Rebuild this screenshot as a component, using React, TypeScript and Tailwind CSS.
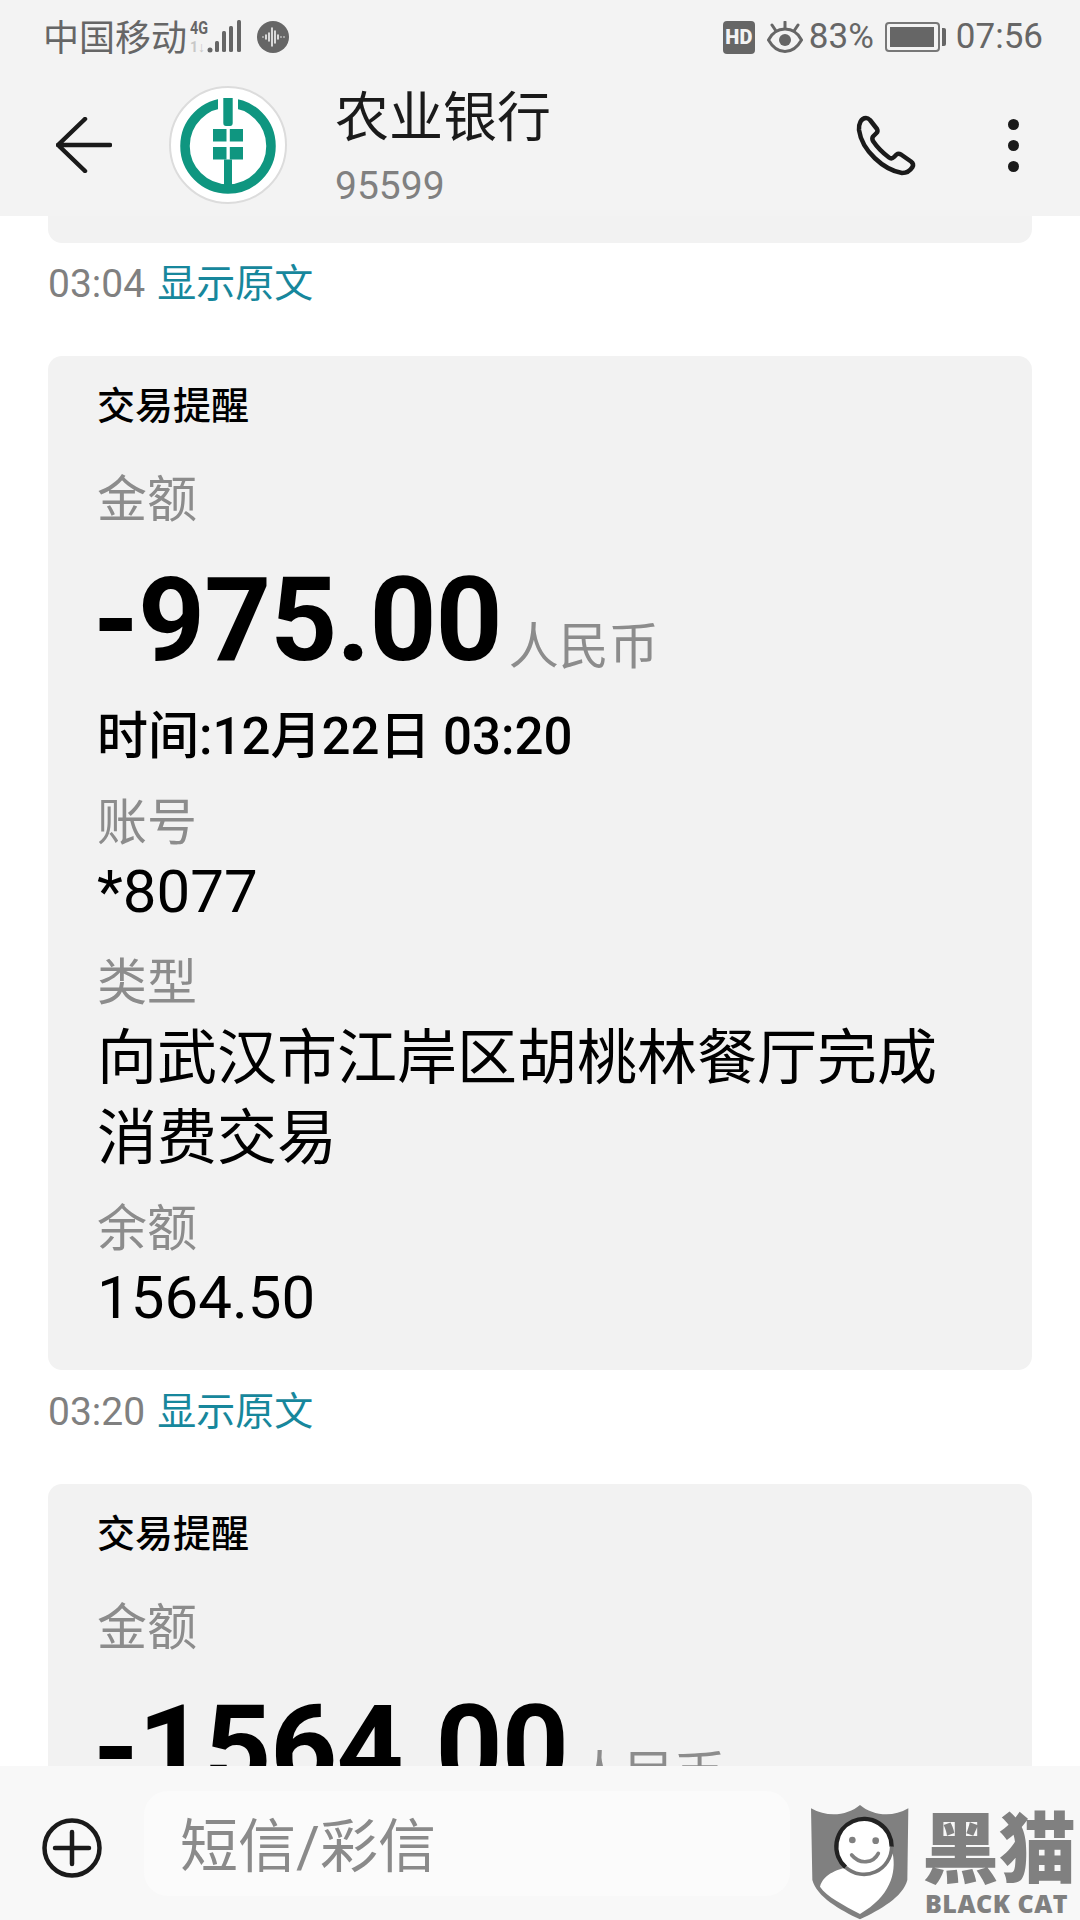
import React from 'react';

function SignalIcon() {
  return (
    <svg width="54" height="36" viewBox="0 0 54 36" className="ml-[3px]">
      <text x="0" y="15" fontSize="18" fontWeight="700" fill="#666" fontFamily="Roboto" textLength="18" lengthAdjust="spacingAndGlyphs">4G</text>
      <text x="0" y="33" fontSize="14" fontWeight="700" fill="#c8c8c8" fontFamily="Roboto">1↓</text>
      <circle cx="20" cy="31" r="2.5" fill="#666" />
      <rect x="25" y="22" width="4" height="11" rx="1.5" fill="#666" />
      <rect x="32" y="12" width="4" height="21" rx="1.5" fill="#666" />
      <rect x="39" y="7" width="4" height="26" rx="1.5" fill="#666" />
      <rect x="47" y="1" width="4" height="32" rx="1.5" fill="#666" />
    </svg>
  );
}

function VoiceIcon() {
  return (
    <svg width="32" height="32" viewBox="0 0 32 32" className="ml-[13px]">
      <circle cx="16" cy="16" r="16" fill="#666" />
      <g stroke="#fff" strokeWidth="1.5" strokeLinecap="round">
        <path d="M6 16v0M9 14v4M12 12v8M15 7v18M18 10v12M21 14v4M24 16v0M27 16v0" />
      </g>
    </svg>
  );
}

function EyeIcon() {
  return (
    <svg width="36" height="32" viewBox="0 0 36 32" fill="none" stroke="#666" strokeWidth="3" className="ml-[12px]">
      <path d="M1.5 19C6 10 12 8 18 8s12 2 16.5 11C30 27 24 30.5 18 30.5S6 27 1.5 19Z" />
      <circle cx="18" cy="19" r="6" fill="#666" stroke="none" />
      <path d="M18 1v6M5 4l4 6M31 4l-4 6" strokeLinecap="round" />
    </svg>
  );
}

function Battery() {
  return (
    <div className="ml-[11px] flex items-center">
      <div className="h-[30px] w-[55px] rounded-[4px] border-2 border-[#777] p-[3px]">
        <div className="h-full w-[44px] bg-[#666]" />
      </div>
      <div className="ml-[2px] h-[18px] w-[4px] rounded-r-[2px] bg-[#666]" />
    </div>
  );
}

function BankLogo() {
  return (
    <svg width="118" height="118" viewBox="-59 -59 118 118" className="ml-[57px] shrink-0">
      <circle r="58" fill="#fff" stroke="#dcdcdc" strokeWidth="2" />
      <circle cy="1" r="43" fill="none" stroke="#0f9680" strokeWidth="9.5" />
      <rect x="-10" y="-50" width="20" height="34" fill="#fff" />
      <path d="M-4.7 -47H4.7V-22Q4.7 -19 2 -19H-2Q-4.7 -19 -4.7 -22Z" fill="#0f9680" />
      <path d="M-15 -16H-1.5V-3.5H-15ZM1.8 -16H15V-3.5H1.8ZM-15 2H-1.5V14.5H-15ZM1.8 2H15V14.5H1.8Z" fill="#0f9680" />
      <rect x="-4" y="14.5" width="8" height="31" fill="#0f9680" />
    </svg>
  );
}

function PhoneIcon() {
  return (
    <svg width="61" height="61" viewBox="0 0 61 61" fill="none" stroke="#1a1a1a" strokeWidth="4.5" strokeLinejoin="round" className="ml-auto shrink-0">
      <path d="M10 3C12 3 13 4 14 5L21 14C22 16 21.5 17 20.5 18L17 21.5C16 23 16 24 17 26C21 32 27 38 33 42.5C35 44 36.5 43.5 38 42L40.5 39.5C42 38.5 43 38.5 45 39.5L55 46.5C57 48 57.5 50 56.5 52C54 56 50 58 46 58C28 55 6 36 3 15C2.5 9 5 3 10 3Z" />
    </svg>
  );
}

function Header() {
  return (
    <header className="h-[216px] shrink-0 bg-[#f3f3f3]">
      <div className="flex h-[74px] items-center pl-[43px] pr-[37px] text-[35px] text-[#666]">
        <span className="mt-[4px] text-[36px]">中国移动</span>
        <SignalIcon />
        <VoiceIcon />
        <div className="ml-auto flex h-[33px] w-[32px] items-center justify-center rounded-[4px] bg-[#666] text-[20px] font-black text-[#f3f3f3]">HD</div>
        <EyeIcon />
        <span className="ml-[6px]">83%</span>
        <Battery />
        <span className="ml-[10px]">07:56</span>
      </div>
      <div className="flex h-[142px] items-center pl-[56px] pr-[61px]">
        <svg width="56" height="56" viewBox="0 0 56 56" fill="none" stroke="#1a1a1a" strokeWidth="4.5" strokeLinecap="round" strokeLinejoin="round" className="shrink-0">
          <path d="M29 2 2 28l27 26M2 28h52" />
        </svg>
        <BankLogo />
        <div className="ml-[48px] mt-[8px]">
          <div className="h-[54px] text-[54px] leading-[54px] text-[#1a1a1a]">农业银行</div>
          <div className="mt-[20px] h-[40px] text-[39px] leading-[40px] text-[#808080]">95599</div>
        </div>
        <PhoneIcon />
        <div className="ml-[91px] flex flex-col gap-[10px]">
          <div className="h-[11px] w-[11px] rounded-full bg-[#1a1a1a]" />
          <div className="h-[11px] w-[11px] rounded-full bg-[#1a1a1a]" />
          <div className="h-[11px] w-[11px] rounded-full bg-[#1a1a1a]" />
        </div>
      </div>
    </header>
  );
}

function TimeRow({ time, className }: { time: string; className: string }) {
  return (
    <div className={`flex h-[40px] items-center text-[39px] leading-[40px] ${className}`}>
      <span className="text-[#808080]">{time}</span>
      <span className="ml-[12px] text-[#17879c]">显示原文</span>
    </div>
  );
}

function Label({ text, className }: { text: string; className: string }) {
  return <div className={`h-[60px] text-[50px] leading-[60px] text-[#8c8c8c] ${className}`}>{text}</div>;
}

function Value({ text, className }: { text: string; className: string }) {
  return <div className={`h-[60px] text-[60px] leading-[60px] text-black ${className}`}>{text}</div>;
}

function MessageCard({ amount, time, account, type, balance }: { amount: string; time: string; account: string; type: string; balance: string }) {
  return (
    <div className="rounded-[14px] bg-[#f2f2f2] pb-[42px] pl-[49px] pr-[50px] pt-[26px]">
      <div className="h-[48px] text-[38px] font-medium leading-[48px] text-black">交易提醒</div>
      <Label text="金额" className="mt-[40px]" />
      <div className="mt-[30px] flex h-[120px] items-center">
        <span className="-ml-[4px] text-[117px] font-bold leading-[120px] tracking-[-1px] text-black">{amount}</span>
        <span className="ml-[7px] mt-[54px] text-[50px] leading-[60px] text-[#8c8c8c]">人民币</span>
      </div>
      <div className="mt-[32px] h-[50px] text-[51px] font-medium leading-[50px] text-black">{time}</div>
      <Label text="账号" className="mt-[31px]" />
      <Value text={account} className="mt-[9px]" />
      <Label text="类型" className="mt-[31px]" />
      <div className="mt-[6px] text-[60px] leading-[80px] text-black">{type}</div>
      <Label text="余额" className="mt-[20px]" />
      <Value text={balance} className="mt-[9px]" />
    </div>
  );
}

function Footer() {
  return (
    <footer className="flex h-[154px] shrink-0 items-center bg-[#f8f8f8] pl-[42px]">
      <svg width="60" height="60" viewBox="0 0 60 60" fill="none" stroke="#1a1a1a" strokeWidth="4.5" strokeLinecap="round" className="mt-[10px] shrink-0">
        <circle cx="30" cy="30" r="27.5" />
        <path d="M30 14v32M13 30h34" />
      </svg>
      <div className="ml-[42px] flex h-[105px] w-[646px] items-center rounded-[24px] bg-[#fbfbfb] pl-[36px] pt-[8px] text-[58px] text-[#8a8a8a]">短信/彩信</div>
    </footer>
  );
}

function Watermark() {
  return (
    <>
      <svg width="380" height="180" viewBox="0 0 1140 540" className="absolute bottom-0 right-0">
        <path d="M333 205C385 235 445 225 480 195C515 225 575 235 625 205L622 420C610 470 540 510 480 538C420 510 350 470 337 420Z" fill="#808080" />
        <path d="M360 440C370 400 420 385 450 380C520 395 565 370 578 340C590 400 570 470 480 522C430 495 380 470 360 440Z" fill="#fff" />
        <circle cx="492" cy="320" r="80" fill="#fff" />
        <path d="M437 382A83 83 0 1 1 575 320" fill="none" stroke="#222" strokeWidth="13" />
        <path d="M575 320A83 83 0 0 1 437 382" fill="none" stroke="#777" strokeWidth="11" />
        <path d="M455 345C480 375 520 370 535 340" fill="none" stroke="#808080" strokeWidth="11" strokeLinecap="round" />
        <circle cx="457" cy="300" r="10" fill="#808080" />
        <circle cx="527" cy="302" r="10" fill="#808080" />
      </svg>
      <div className="absolute bottom-[34px] left-[922px] whitespace-nowrap text-[77px] font-black leading-[70px] text-[#808080]">黑猫</div>
      <div className="absolute bottom-[5px] left-[925px] whitespace-nowrap font-['Open_Sans'] text-[25px] font-extrabold leading-[24px] tracking-[0.5px] text-[#808080]">BLACK CAT</div>
    </>
  );
}

export default function App() {
  return (
    <div className="relative flex h-[1920px] w-[1080px] flex-col overflow-hidden bg-white font-[Roboto,'Noto_Sans_CJK_SC',sans-serif]">
      <Header />
      <main className="min-h-0 flex-1 overflow-hidden px-[48px]">
        <div className="h-[27px] rounded-b-[14px] bg-[#f2f2f2]" />
        <TimeRow time="03:04" className="mt-[21px]" />
        <div className="mt-[52px]">
          <MessageCard amount="-975.00" time="时间:12月22日 03:20" account="*8077" type="向武汉市江岸区胡桃林餐厅完成消费交易" balance="1564.50" />
        </div>
        <TimeRow time="03:20" className="mt-[22px]" />
        <div className="mt-[52px]">
          <MessageCard amount="-1564.00" time="时间:12月22日 03:20" account="*8077" type="向武汉市江岸区胡桃林餐厅完成消费交易" balance="0.50" />
        </div>
      </main>
      <Footer />
      <Watermark />
    </div>
  );
}
